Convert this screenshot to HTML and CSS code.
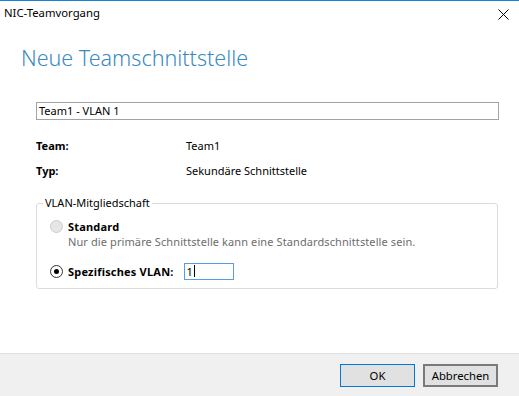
FILE: index.html
```html
<!DOCTYPE html>
<html lang="de">
<head>
<meta charset="utf-8">
<title>NIC-Teamvorgang</title>
<link rel="stylesheet" href="styles.css">
</head>
<body>
<div class="window">
  <div class="titlebar">
    <span class="title">NIC-Teamvorgang</span>
    <svg class="close" width="11" height="11" viewBox="0 0 11 11"><path d="M0.5 0.5L10.5 10.5M10.5 0.5L0.5 10.5" stroke="#000" stroke-width="1" fill="none"/></svg>
  </div>
  <div class="main">
    <h1 class="heading">Neue Teamschnittstelle</h1>
    <div class="namebox">Team1 - VLAN 1</div>
    <div class="info">
      <span class="label">Team:</span><span class="value">Team1</span>
      <span class="label">Typ:</span><span class="value">Sekundäre Schnittstelle</span>
    </div>
    <fieldset class="group">
      <legend class="legend">VLAN-Mitgliedschaft</legend>
      <div class="radio-row first">
        <span class="radio disabled"></span>
        <span class="radio-label">Standard</span>
      </div>
      <div class="desc">Nur die primäre Schnittstelle kann eine Standardschnittstelle sein.</div>
      <div class="radio-row second">
        <span class="radio checked"></span>
        <span class="radio-label">Spezifisches VLAN:</span>
        <span class="vlan-input">1<span class="caret"></span></span>
      </div>
    </fieldset>
  </div>
  <div class="footer">
    <button class="btn btn-default">OK</button>
    <button class="btn btn-cancel">Abbrechen</button>
  </div>
</div>
</body>
</html>
```

FILE: styles.css
```css
* { box-sizing: border-box; }
html, body { margin: 0; padding: 0; background: #fff; }
body {
  font-family: "Noto Sans", "Open Sans", sans-serif;
  font-size: 11px;
  color: #000;
}
.window {
  width: 519px;
  height: 396px;
  display: flex;
  flex-direction: column;
  background: #fff;
  overflow: hidden;
}
.titlebar {
  border-top: 1px solid #1883d7;
  height: 32px;
  display: flex;
  justify-content: space-between;
  align-items: flex-start;
}
.title {
  padding-left: 4px;
  line-height: 24px;
  font-size: 11.3px;
}
.close {
  margin-top: 8px;
  margin-right: 10px;
}
.main {
  flex: 1;
}
.heading {
  margin: 11px 0 0 21px;
  font-size: 21.5px;
  font-weight: 300;
  line-height: 30px;
  color: #3a8ac0;
}
.namebox {
  margin: 29px 0 0 36px;
  width: 463px;
  height: 18px;
  border: 1px solid #a3a3a3;
  padding-left: 2px;
  line-height: 16px;
}
.info {
  margin: 13px 0 0 36px;
  display: grid;
  grid-template-columns: 150px 1fr;
  grid-auto-rows: 25px;
  align-items: center;
}
.label { font-weight: 700; }
.group {
  margin: 12px 0 0 36px;
  width: 462px;
  border: 1px solid #dcdcdc;
  border-radius: 3px;
  padding: 0 0 8px 13px;
  min-width: 0;
}
.legend {
  margin-left: -7px;
  padding: 0 2px;
  line-height: 16px;
  color: #000;
}
.radio-row {
  display: flex;
  align-items: center;
}
.radio-row.first {
  margin-top: 7px;
  height: 16px;
}
.radio-row.second {
  margin-top: 12px;
  height: 18px;
}
.radio {
  width: 13px;
  height: 13px;
  border-radius: 50%;
  border: 1px solid #333;
  background: #fff;
  margin-right: 5px;
  display: flex;
  align-items: center;
  justify-content: center;
  flex: none;
}
.radio.disabled {
  border-color: #cccccc;
  background: #e6e6e6;
}
.radio.checked::after {
  content: "";
  width: 5px;
  height: 5px;
  border-radius: 50%;
  background: #000;
}
.radio-label {
  font-weight: 700;
  letter-spacing: 0.2px;
}
.desc {
  margin-left: 18px;
  line-height: 16px;
  color: #6d6d6d;
  letter-spacing: 0.1px;
}
.vlan-input {
  margin-left: 10px;
  width: 50px;
  height: 17px;
  border: 1px solid #5a9ee0;
  padding-left: 2px;
  line-height: 15px;
  display: flex;
  align-items: center;
}
.caret {
  display: inline-block;
  width: 1px;
  height: 12px;
  background: #000;
  margin-left: 1px;
}
.footer {
  height: 43px;
  border-top: 1px solid #dfdfdf;
  background: #f0f0f0;
  display: flex;
  justify-content: flex-end;
  align-items: flex-start;
  padding: 10px 21px 0 0;
  gap: 8px;
}
.btn {
  font-family: inherit;
  font-size: 11.3px;
  width: 75px;
  height: 23px;
  background: #e1e1e1;
  color: #000;
  padding: 0;
  margin: 0;
}
.btn-default { border: 1px solid #0078d7; }
.btn-cancel { border: 2px solid #7a7a7a; }
```
